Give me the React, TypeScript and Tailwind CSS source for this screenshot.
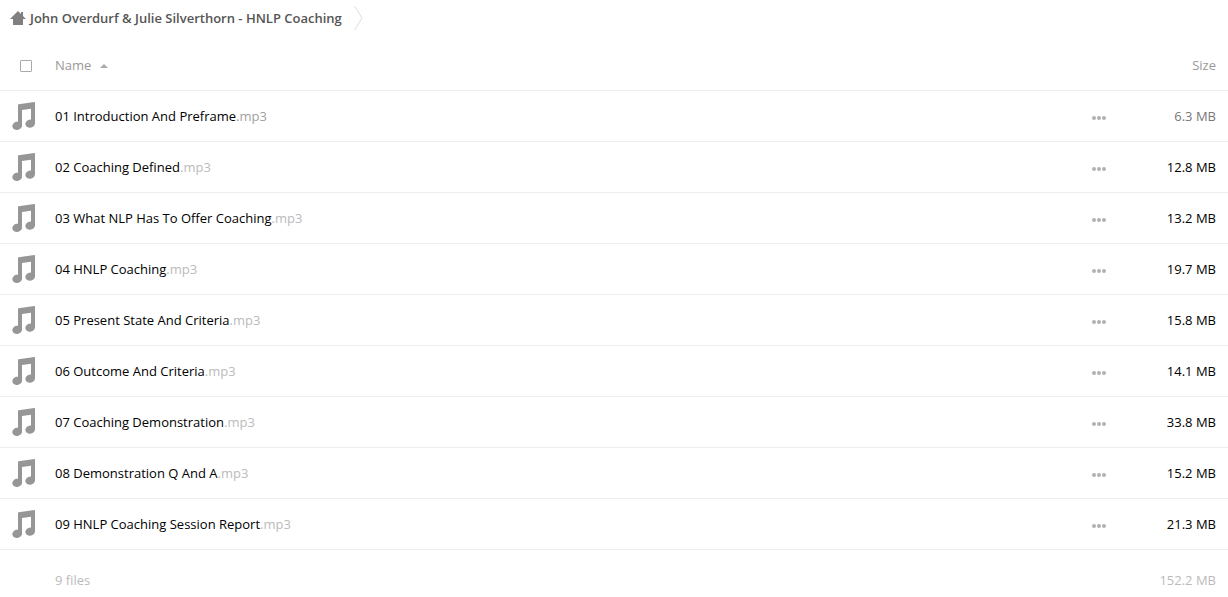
import React, { useState } from "react";

type FileRow = {
  name: string;
  ext: string;
  size: string;
  nameColor: string;
  extColor: string;
  sizeColor: string;
};

const base = { ext: ".mp3", nameColor: "text-black", extColor: "text-[#bbbbbb]", sizeColor: "text-black" };

const files: FileRow[] = [
  { ...base, name: "01 Introduction And Preframe", size: "6.3 MB", extColor: "text-[#a0a0a0]", sizeColor: "text-[#777777]" },
  { ...base, name: "02 Coaching Defined", size: "12.8 MB" },
  { ...base, name: "03 What NLP Has To Offer Coaching", size: "13.2 MB" },
  { ...base, name: "04 HNLP Coaching", size: "19.7 MB" },
  { ...base, name: "05 Present State And Criteria", size: "15.8 MB" },
  { ...base, name: "06 Outcome And Criteria", size: "14.1 MB" },
  { ...base, name: "07 Coaching Demonstration", size: "33.8 MB" },
  { ...base, name: "08 Demonstration Q And A", size: "15.2 MB" },
  { ...base, name: "09 HNLP Coaching Session Report", size: "21.3 MB" },
];

function HomeIcon() {
  return (
    <svg width="16" height="14" viewBox="0 0 16 14" fill="#808080" aria-hidden="true">
      <path d="M8 0 0 8H3v6h10V8h3L13 5V1h-2v2z" />
    </svg>
  );
}

function MusicIcon() {
  return (
    <svg width="24" height="28" viewBox="0 0 24 28" fill="#969696" aria-hidden="true">
      <path d="M6 2.9Q6 2.3 6.6 2.2L22.4 0Q23 0 23 0.6V21.5H19V6.8L10 8V24H6Z" />
      <ellipse cx="5.2" cy="23.8" rx="4.9" ry="4.1" transform="rotate(-15 5.2 23.8)" />
      <ellipse cx="18.2" cy="21.6" rx="4.9" ry="4.1" transform="rotate(-15 18.2 21.6)" />
    </svg>
  );
}

function DotsIcon() {
  return (
    <svg width="14" height="4" viewBox="0 0 14 4" fill="#b2b2b2" aria-hidden="true">
      <circle cx="2" cy="2" r="2" />
      <circle cx="7" cy="2" r="2" />
      <circle cx="12" cy="2" r="2" />
    </svg>
  );
}

export default function App() {
  const [allSelected, setAllSelected] = useState(false);
  const [ascending, setAscending] = useState(true);
  const rows = ascending ? files : [...files].reverse();

  return (
    <main className="w-full bg-white font-['Open_Sans','Noto_Sans',sans-serif] text-[13px] leading-5">
      <nav aria-label="Breadcrumb" className="flex h-10 items-start pl-2.5 pt-1.5">
        <a href="#" className="flex h-6 items-center gap-1 font-semibold text-[#555555]">
          <HomeIcon />
          John Overdurf &amp; Julie Silverthorn - HNLP Coaching
        </a>
        <svg className="ml-3" width="9" height="24" viewBox="0 0 9 24" fill="none" stroke="#dddddd" aria-hidden="true">
          <path d="M0.5 0 8 12 0.5 24" />
        </svg>
      </nav>

      <table className="w-full table-fixed border-collapse">
        <colgroup>
          <col className="w-[55px]" />
          <col />
          <col className="w-16" />
          <col className="w-24" />
        </colgroup>
        <thead>
          <tr className="h-[50px] border-b border-[#eeeeee] text-[#999999]">
            <th className="pl-5 pt-0.5 text-left">
              <input
                type="checkbox"
                aria-label="Select all"
                checked={allSelected}
                onChange={(e) => setAllSelected(e.target.checked)}
                className="block size-3 appearance-none rounded-[1px] border border-[#aaaaaa] bg-white checked:bg-[#aaaaaa]"
              />
            </th>
            <th className="text-left font-normal">
              <button type="button" onClick={() => setAscending(!ascending)} className="flex items-center gap-2">
                Name
                <svg className="mt-0.5" width="10" height="4" viewBox="0 0 10 4" fill="#aaaaaa" aria-hidden="true">
                  <path d={ascending ? "M1 4 5 0 9 4z" : "M1 0 5 4 9 0z"} />
                </svg>
              </button>
            </th>
            <th />
            <th className="pr-3 text-right font-normal">
              <button type="button">Size</button>
            </th>
          </tr>
        </thead>
        <tbody>
          {rows.map((file) => (
            <tr key={file.name} className="h-[51px] border-b border-[#eeeeee]">
              <td className="pl-3">
                <MusicIcon />
              </td>
              <td>
                <a href="#" className={file.nameColor}>
                  {file.name}
                  <span className={file.extColor}>{file.ext}</span>
                </a>
              </td>
              <td>
                <button type="button" aria-label={`Actions for ${file.name}`} className="flex h-6 w-full items-center pl-6 pt-1">
                  <DotsIcon />
                </button>
              </td>
              <td className={`pr-3 text-right ${file.sizeColor}`}>{file.size}</td>
            </tr>
          ))}
        </tbody>
        <tfoot>
          <tr className="h-[61px] text-[#bbbbbb]">
            <td />
            <td>9 files</td>
            <td />
            <td className="pr-3 text-right">152.2 MB</td>
          </tr>
        </tfoot>
      </table>
    </main>
  );
}
